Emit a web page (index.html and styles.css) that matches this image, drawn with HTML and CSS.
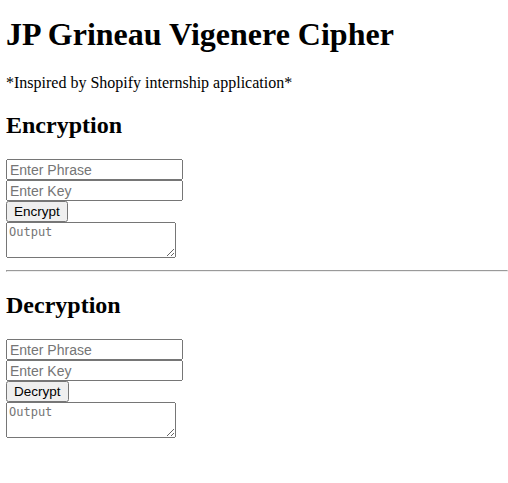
FILE: index.html
```html
<!DOCTYPE html>
<html>
<head>
<meta charset="utf-8">
<title>JP Grineau Vigenere Cipher</title>
<link rel="stylesheet" href="styles.css">
</head>
<body>
<h1 class="title">JP Grineau Vigenere Cipher</h1>
<p>*Inspired by Shopify internship application*</p>
<h2>Encryption</h2>
<form class="cipher">
<input class="field" type="text" placeholder="Enter Phrase"><br>
<input class="field" type="text" placeholder="Enter Key"><br>
<button class="btn" type="button">Encrypt</button><br>
<textarea class="out" placeholder="Output"></textarea>
</form>
<hr class="rule">
<h2>Decryption</h2>
<form class="cipher">
<input class="field" type="text" placeholder="Enter Phrase"><br>
<input class="field" type="text" placeholder="Enter Key"><br>
<button class="btn" type="button">Decrypt</button><br>
<textarea class="out" placeholder="Output"></textarea>
</form>
</body>
</html>
```
FILE: styles.css
```css
body {
  font-family: "Liberation Serif", serif;
  margin: 0 0 0 6px;
}
.title {
  margin-top: 16px;
}
.field {
  font-family: "Liberation Sans", sans-serif;
  font-size: 14px;
  width: 177px;
  height: 21px;
  box-sizing: border-box;
}
.field::placeholder {
  color: #757575;
}
.btn {
  font-family: "Liberation Sans", sans-serif;
  font-size: 13.5px;
}
.out {
  font-family: "DejaVu Sans Mono", monospace;
  font-size: 12px;
  width: 170px;
  height: 36px;
  box-sizing: border-box;
}
.rule {
  margin-right: 0;
}
```
